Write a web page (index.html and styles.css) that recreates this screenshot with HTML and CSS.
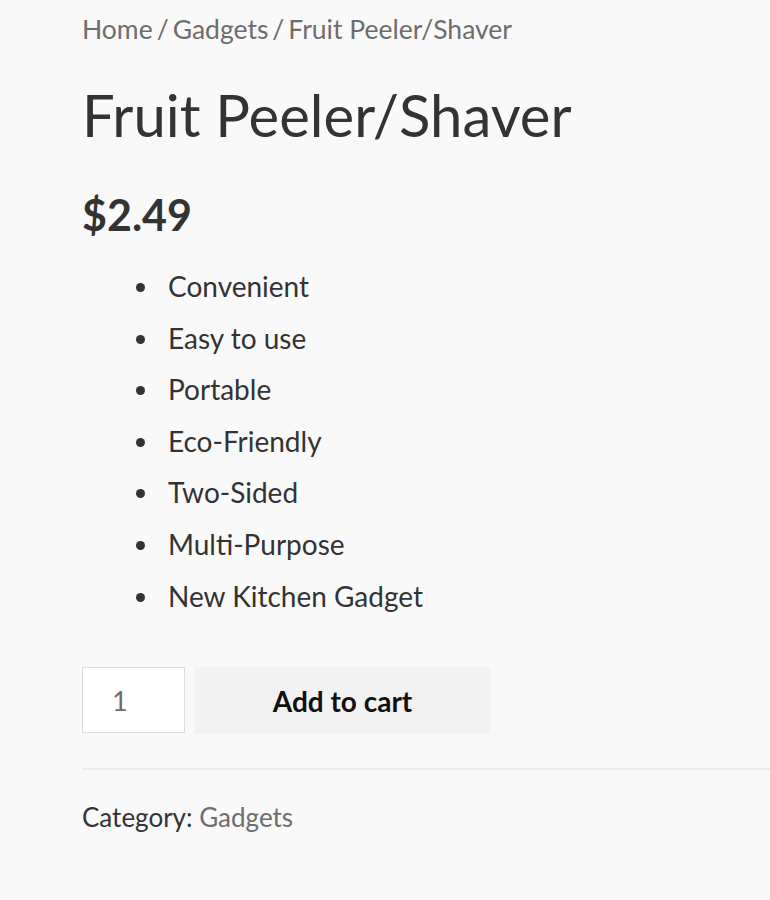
FILE: index.html
```html
<!DOCTYPE html>
<html>
<head>
<meta charset="utf-8">
<link rel="stylesheet" href="styles.css">
</head>
<body>
<div class="page">
  <nav class="breadcrumb"><a href="#">Home</a><span class="sep">/</span><a href="#">Gadgets</a><span class="sep">/</span>Fruit Peeler/Shaver</nav>
  <h1 class="title">Fruit Peeler/Shaver</h1>
  <p class="price">$2.49</p>
  <ul class="features">
    <li>Convenient</li>
    <li>Easy to use</li>
    <li>Portable</li>
    <li>Eco-Friendly</li>
    <li>Two-Sided</li>
    <li>Multi-Purpose</li>
    <li>New Kitchen Gadget</li>
  </ul>
  <form class="cart">
    <input class="qty" type="number" value="1">
    <button class="add" type="button">Add to cart</button>
  </form>
  <div class="meta">Category: <a href="#">Gadgets</a></div>
</div>
</body>
</html>
```
FILE: styles.css
```css
html, body {
  margin: 0;
  padding: 0;
  background: #f9f9f9;
}
body {
  font-family: Lato, "Open Sans", sans-serif;
  color: #333333;
}
.page {
  padding-left: 82px;
}
a {
  color: #6d6d6d;
  text-decoration: none;
}
.breadcrumb {
  font-size: 26.5px;
  color: #6d6d6d;
  padding-top: 12px;
  line-height: 35px;
}
.sep {
  margin: 0 4px;
}
.title {
  margin: 33px 0 0;
  font-size: 58px;
  font-weight: 400;
  line-height: 70px;
  color: #333333;
}
.price {
  margin: 39px 0 0;
  font-size: 43px;
  font-weight: 700;
  line-height: 52px;
}
.features {
  margin: 20px 0 0;
  padding-left: 86px;
  list-style: none;
  font-size: 28px;
  line-height: 51.6px;
}
.features li::before {
  content: "";
  display: inline-block;
  width: 9px;
  height: 9px;
  border-radius: 50%;
  background: #333333;
  margin-left: -32px;
  margin-right: 23px;
  vertical-align: 5px;
}
.cart {
  display: flex;
  align-items: flex-start;
  gap: 10px;
  margin-top: 45px;
  padding-bottom: 34px;
  border-bottom: 2px solid #ececec;
}
.qty {
  box-sizing: border-box;
  width: 103px;
  height: 66px;
  border: 1px solid #dcdcdc;
  background: #ffffff;
  font-family: Lato, sans-serif;
  font-size: 27px;
  color: #6d6d6d;
  padding: 0 0 0 29px;
  margin: 0;
  -moz-appearance: textfield;
  outline: none;
}
.qty::-webkit-inner-spin-button,
.qty::-webkit-outer-spin-button {
  -webkit-appearance: none;
  margin: 0;
}
.add {
  box-sizing: border-box;
  width: 295px;
  height: 67px;
  border: none;
  background: #f2f2f2;
  font-family: Lato, sans-serif;
  font-size: 28px;
  font-weight: 700;
  color: #111111;
  margin: 0;
}
.meta {
  margin-top: 30px;
  font-size: 26px;
  line-height: 34px;
  color: #333333;
}
```
